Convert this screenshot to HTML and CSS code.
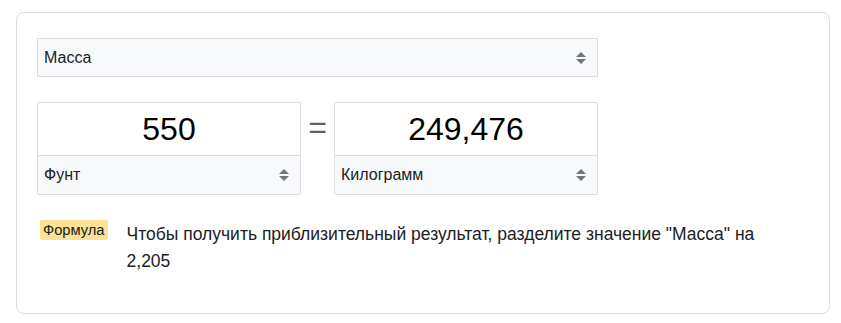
FILE: index.html
```html
<!DOCTYPE html>
<html>
<head>
    <meta charset="UTF-8">
    <title>Конвертер</title>
    <link rel="stylesheet" href="styles.css">
</head>
<body>
<div class="card">
    <div class="sel sel-top">
        <span>Масса</span>
        <span class="arrows"><i class="up"></i><i class="down"></i></span>
    </div>
    <div class="row">
        <div class="box">
            <div class="num">550</div>
            <div class="sel">
                <span>Фунт</span>
                <span class="arrows"><i class="up"></i><i class="down"></i></span>
            </div>
        </div>
        <div class="eq">=</div>
        <div class="box">
            <div class="num">249,476</div>
            <div class="sel">
                <span>Килограмм</span>
                <span class="arrows"><i class="up"></i><i class="down"></i></span>
            </div>
        </div>
    </div>
    <div class="formula">
        <span class="badge">Формула</span>
        <p class="ftext">Чтобы получить приблизительный результат, разделите значение "Масса" на 2,205</p>
    </div>
</div>
</body>
</html>
```

FILE: styles.css
```css
body {
    margin: 0;
    padding: 12px 0 0 16px;
    font-family: Arial, "Liberation Sans", sans-serif;
    color: #202124;
    background: #fff;
}

.card {
    box-sizing: border-box;
    width: 814px;
    height: 302px;
    border: 1px solid #dadce0;
    border-radius: 8px;
    padding: 25px 20px 0 20px;
}

.sel {
    box-sizing: border-box;
    display: flex;
    justify-content: space-between;
    align-items: center;
    height: 38px;
    padding: 0 11px 0 6px;
    background: #f8f9fa;
    border: 1px solid #dadce0;
    font-size: 16px;
    color: #202124;
}

.sel-top {
    width: 561px;
    height: 39px;
}

.arrows {
    display: flex;
    flex-direction: column;
    gap: 2px;
}

.arrows i {
    display: block;
    width: 0;
    height: 0;
    border-left: 5px solid transparent;
    border-right: 5px solid transparent;
}

.arrows .up {
    border-bottom: 5px solid #70757a;
}

.arrows .down {
    border-top: 5px solid #70757a;
}

.row {
    display: flex;
    align-items: flex-start;
    margin-top: 25px;
}

.box {
    box-sizing: border-box;
    width: 264px;
    border: 1px solid #dadce0;
    border-radius: 2px;
}

.box .sel {
    border: none;
    border-top: 1px solid #dadce0;
    height: 39px;
}

.num {
    height: 52px;
    line-height: 52px;
    text-align: center;
    font-size: 32px;
    color: #000;
}

.eq {
    width: 33px;
    text-align: center;
    font-size: 32px;
    line-height: 50px;
    color: #5f6368;
}

.formula {
    display: flex;
    align-items: flex-start;
    margin-top: 25px;
}

.badge {
    flex: none;
    margin: 0 19px 0 3px;
    padding: 0 3px;
    height: 20px;
    line-height: 20px;
    font-size: 14.7px;
    background: #fde293;
    border-radius: 2px;
    color: #202124;
}

.ftext {
    margin: 1px 0 0 0;
    width: 650px;
    font-size: 17.5px;
    line-height: 27px;
    color: #202124;
}
```
